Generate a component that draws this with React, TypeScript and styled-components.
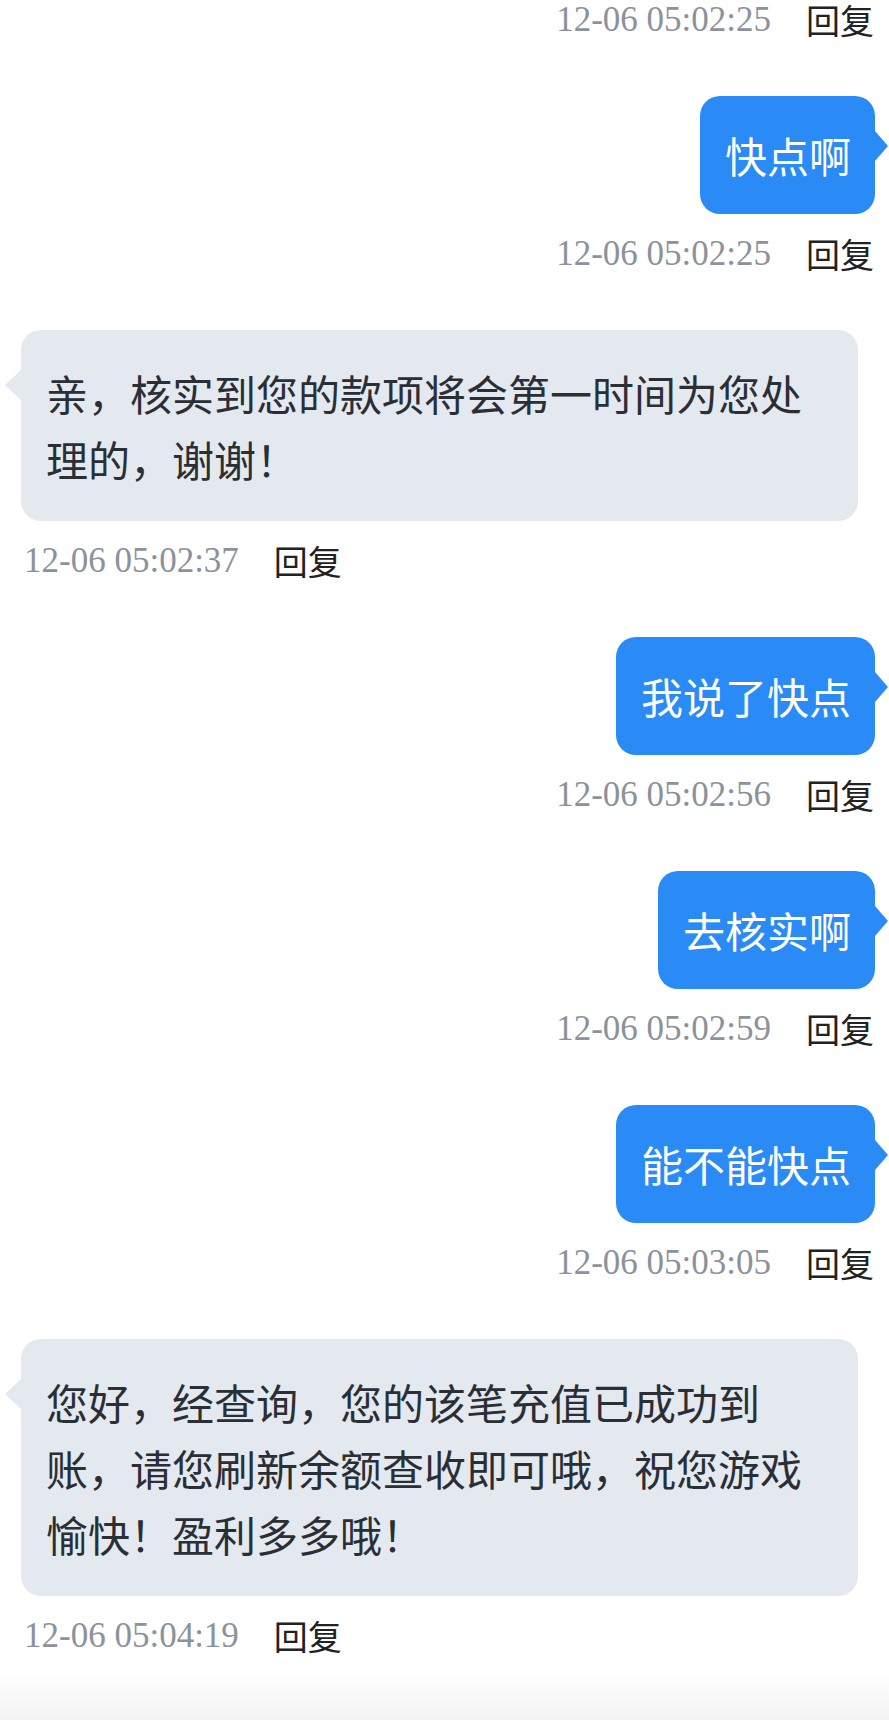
import React from 'react'
import styled, { createGlobalStyle } from 'styled-components'

interface Message {
  from: 'me' | 'agent';
  text?: string;
  time: string;
}

const messages: Message[] = [
  { from: 'me', text: '快点啊', time: '12-06 05:02:25' },
  { from: 'agent', text: '亲，核实到您的款项将会第一时间为您处理的，谢谢！', time: '12-06 05:02:37' },
  { from: 'me', text: '我说了快点', time: '12-06 05:02:56' },
  { from: 'me', text: '去核实啊', time: '12-06 05:02:59' },
  { from: 'me', text: '能不能快点', time: '12-06 05:03:05' },
  { from: 'agent', text: '您好，经查询，您的该笔充值已成功到账，请您刷新余额查收即可哦，祝您游戏愉快！盈利多多哦！', time: '12-06 05:04:19' },
]

const GlobalStyle = createGlobalStyle`
  html, body {
    margin: 0;
    padding: 0;
    background: #fff;
  }
  * { box-sizing: border-box; }
`

const App: React.FC = () => {
  return (
    <>
      <GlobalStyle />
      <Page>
        <ChatList>
          {/* tail of the previous message, its bubble scrolled out of view */}
          <Meta side="me">
            <Time>12-06 05:02:25</Time>
            <Reply>回复</Reply>
          </Meta>
          {messages.map((m, i) => (
            <Group key={i} side={m.from}>
              <Bubble side={m.from}>{m.text}</Bubble>
              <Meta side={m.from}>
                <Time>{m.time}</Time>
                <Reply>回复</Reply>
              </Meta>
            </Group>
          ))}
        </ChatList>
        <BottomShade />
      </Page>
    </>
  )
}

const Page = styled.div`
  width: 889px;
  height: 1720px;
  display: flex;
  flex-direction: column;
  background: #fff;
  overflow: hidden;
`

const ChatList = styled.div`
  flex: 1;
  display: flex;
  flex-direction: column;
  padding: 0 14px 0 21px;
`

const Group = styled.div<{ side: 'me' | 'agent' }>`
  display: flex;
  flex-direction: column;
  align-items: ${p => (p.side === 'me' ? 'flex-end' : 'flex-start')};
  margin-top: 56px;
`

const Bubble = styled.div<{ side: 'me' | 'agent' }>`
  position: relative;
  max-width: 837px;
  border-radius: 20px;
  font-family: "Noto Sans CJK SC", "Noto Sans", sans-serif;
  font-size: 42px;
  line-height: 66px;
  word-break: break-all;
  line-break: strict;
  padding: ${p => (p.side === 'me' ? '26px 24px 26px 25px' : '30px 25px 29px 25px')};
  background: ${p => (p.side === 'me' ? '#2a8af6' : '#e4e9f0')};
  color: ${p => (p.side === 'me' ? '#ffffff' : '#2a2e35')};
  margin-left: ${p => (p.side === 'agent' ? '0' : '0')};

  &::after {
    content: '';
    position: absolute;
    width: 0;
    height: 0;
    border-top: 15px solid transparent;
    border-bottom: 15px solid transparent;
    ${p =>
      p.side === 'me'
        ? `top: 35px; right: -13px; border-left: 13px solid #2a8af6;`
        : `top: 40px; left: -16px; border-right: 16px solid #e4e9f0;`}
  }
`

const Meta = styled.div<{ side: 'me' | 'agent' }>`
  display: flex;
  align-items: center;
  gap: 35px;
  height: 40px;
  margin-top: 20px;
  align-self: ${p => (p.side === 'me' ? 'flex-end' : 'flex-start')};
  padding-left: ${p => (p.side === 'agent' ? '3px' : '0')};
  padding-right: ${p => (p.side === 'me' ? '1px' : '0')};
  &:first-child {
    margin-top: 0;
  }
`

const Time = styled.span`
  font-family: "Liberation Serif", "Times New Roman", serif;
  font-size: 35px;
  line-height: 40px;
  color: #8b929c;
`

const Reply = styled.span`
  font-family: "Noto Sans CJK SC", "Noto Sans", sans-serif;
  font-size: 34px;
  line-height: 40px;
  color: #222;
`

const BottomShade = styled.div`
  height: 48px;
  flex-shrink: 0;
  background: linear-gradient(to bottom, #ffffff, #f3f3f3);
`

export default App
